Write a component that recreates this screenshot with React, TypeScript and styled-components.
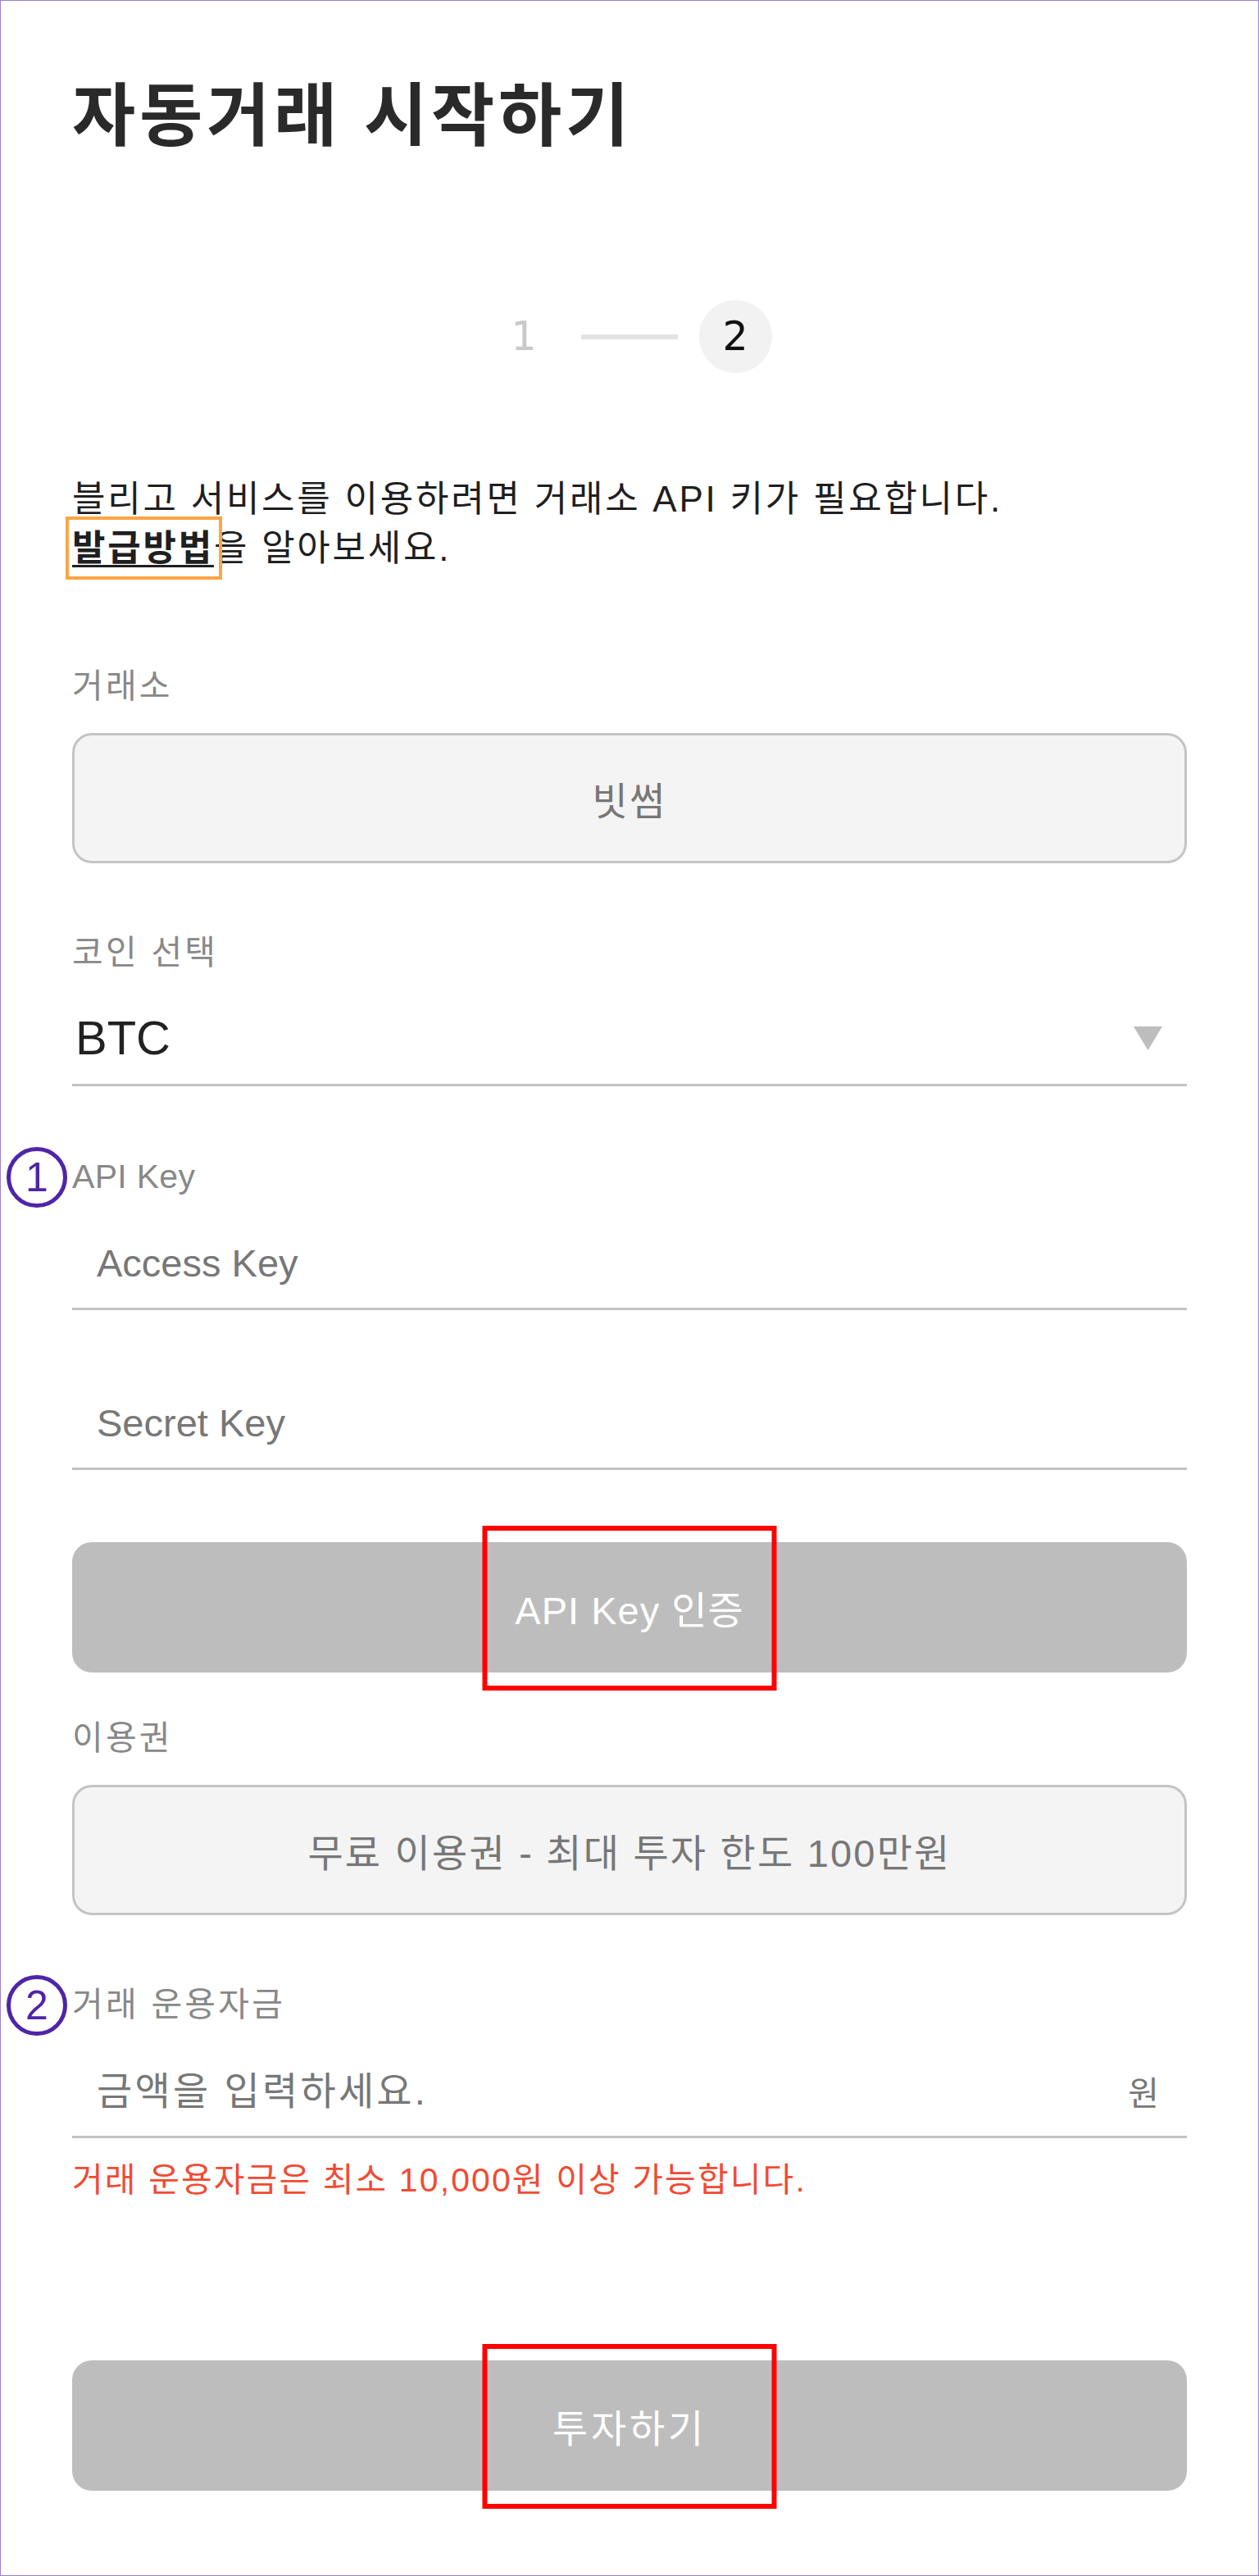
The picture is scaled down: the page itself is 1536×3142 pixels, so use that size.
import React from "react";
import styled, { createGlobalStyle } from "styled-components";

const GlobalStyle = createGlobalStyle`
  html, body { margin: 0; padding: 0; background: #fff; }
  body { font-family: "Liberation Sans", "Noto Sans CJK KR", sans-serif; }
  *, *::before, *::after { box-sizing: border-box; }
`;

const Frame = styled.main`
  width: 1536px;
  min-height: 3142px;
  border: 1px solid #9b80d3;
  padding: 91px 87px 103px;
  display: flex;
  flex-direction: column;
  background: #fff;
`;

const Title = styled.h1`
  margin: 0;
  font-size: 84px;
  line-height: 100px;
  font-weight: 700;
  letter-spacing: 4.7px;
  color: #2a2a2a;
`;

const Stepper = styled.div`
  margin-top: 174px;
  height: 89px;
  display: flex;
  justify-content: center;
  align-items: center;
`;

const StepDot = styled.div<{ $active?: boolean }>`
  width: 89px;
  height: 89px;
  border-radius: 50%;
  display: flex;
  align-items: center;
  justify-content: center;
  background: ${(p) => (p.$active ? "#f2f2f2" : "transparent")};
  color: ${(p) => (p.$active ? "#111" : "#c9c9c9")};
  font-family: "DejaVu Sans", sans-serif;
  font-size: 49px;
  line-height: 1;
`;

const StepLine = styled.div`
  width: 118px;
  height: 6px;
  background: #e2e2e2;
  margin: 0 26px 0 25px;
`;

const Description = styled.p`
  margin: 124px 0 0;
  font-size: 44px;
  line-height: 60px;
  letter-spacing: 2.75px;
  color: #1f1f1f;
`;

const GuideLink = styled.a`
  position: relative;
  color: #1f1f1f;
  font-weight: 700;
  text-decoration: underline;
  text-decoration-thickness: 3px;
  text-underline-offset: 5px;
  &::after {
    content: "";
    position: absolute;
    top: -14px;
    bottom: -14px;
    left: -8px;
    right: -10px;
    border: 4px solid #ffa445;
  }
`;

const Label = styled.div<{ $gap: number; $tracking?: number }>`
  position: relative;
  margin-top: ${(p) => p.$gap}px;
  font-size: 41px;
  line-height: 50px;
  letter-spacing: ${(p) => p.$tracking ?? 3.2}px;
  color: #888;
`;

const Marker = styled.span`
  position: absolute;
  left: -80px;
  top: 50%;
  width: 74px;
  height: 74px;
  margin-top: -36px;
  border: 5px solid #4f25a8;
  border-radius: 50%;
  display: flex;
  align-items: center;
  justify-content: center;
  color: #4f25a8;
  font-size: 50px;
  line-height: 1;
  letter-spacing: 0;
`;

const ReadonlyBox = styled.div`
  margin-top: 32px;
  height: 159px;
  border: 3px solid #c4c4c4;
  border-radius: 24px;
  background: #f4f4f4;
  display: flex;
  align-items: center;
  justify-content: center;
  font-size: 47px;
  letter-spacing: 2.2px;
  color: #777;
`;

const SelectRow = styled.div`
  display: flex;
  align-items: center;
  justify-content: space-between;
  padding: 49px 30px 26px 4px;
  border-bottom: 3px solid #c2c2c2;
  font-size: 58px;
  line-height: 60px;
  color: #222;
`;

const InputRow = styled.label<{ $gap?: number }>`
  display: flex;
  align-items: center;
  margin-top: ${(p) => p.$gap ?? 0}px;
  padding: 50px 34px 25px 30px;
  border-bottom: 3px solid #c2c2c2;
`;

const TextInput = styled.input<{ $tracking?: number }>`
  flex: 1;
  min-width: 0;
  height: 60px;
  padding: 0;
  border: none;
  outline: none;
  background: transparent;
  font-family: inherit;
  font-size: 47px;
  letter-spacing: ${(p) => p.$tracking ?? 0}px;
  color: #222;
  &::placeholder {
    color: #777;
  }
`;

const Suffix = styled.span`
  font-size: 41px;
  color: #777;
`;

const ErrorText = styled.p`
  margin: 26px 0 0;
  font-size: 41px;
  line-height: 50px;
  letter-spacing: 2.1px;
  color: #f14b33;
`;

const ActionButton = styled.button<{ $gap: number; $tracking: number }>`
  position: relative;
  margin-top: ${(p) => p.$gap}px;
  width: 100%;
  height: 159px;
  border: none;
  border-radius: 24px;
  background: #bdbdbd;
  color: #fff;
  font-family: inherit;
  font-size: 47px;
  letter-spacing: ${(p) => p.$tracking}px;
  cursor: pointer;
`;

const Highlight = styled.span`
  position: absolute;
  left: 50%;
  top: -20px;
  width: 359px;
  height: 201px;
  transform: translateX(-50%);
  border: 6px solid #ff0000;
  pointer-events: none;
`;

export default function App() {
  return (
    <>
      <GlobalStyle />
      <Frame>
        <Title>자동거래 시작하기</Title>

        <Stepper>
          <StepDot>1</StepDot>
          <StepLine />
          <StepDot $active>2</StepDot>
        </Stepper>

        <Description>
          블리고 서비스를 이용하려면 거래소 API 키가 필요합니다.
          <br />
          <GuideLink href="#guide">발급방법</GuideLink>을 알아보세요.
        </Description>

        <Label $gap={113}>거래소</Label>
        <ReadonlyBox>빗썸</ReadonlyBox>

        <Label $gap={84}>코인 선택</Label>
        <SelectRow>
          <span>BTC</span>
          <svg width="35" height="29" viewBox="0 0 35 29" aria-hidden="true">
            <polygon points="0,0 35,0 17.5,29" fill="#bdbdbd" />
          </svg>
        </SelectRow>

        <Label $gap={85} $tracking={0.3}>
          <Marker>1</Marker>
          API Key
        </Label>
        <InputRow>
          <TextInput placeholder="Access Key" />
        </InputRow>
        <InputRow $gap={57}>
          <TextInput placeholder="Secret Key" />
        </InputRow>

        <ActionButton $gap={88} $tracking={1}>
          API Key 인증
          <Highlight />
        </ActionButton>

        <Label $gap={55}>이용권</Label>
        <ReadonlyBox>무료 이용권 - 최대 투자 한도 100만원</ReadonlyBox>

        <Label $gap={84}>
          <Marker>2</Marker>
          거래 운용자금
        </Label>
        <InputRow>
          <TextInput placeholder="금액을 입력하세요." $tracking={3.2} />
          <Suffix>원</Suffix>
        </InputRow>
        <ErrorText>거래 운용자금은 최소 10,000원 이상 가능합니다.</ErrorText>

        <ActionButton $gap={195} $tracking={3.75}>
          투자하기
          <Highlight />
        </ActionButton>
      </Frame>
    </>
  );
}
